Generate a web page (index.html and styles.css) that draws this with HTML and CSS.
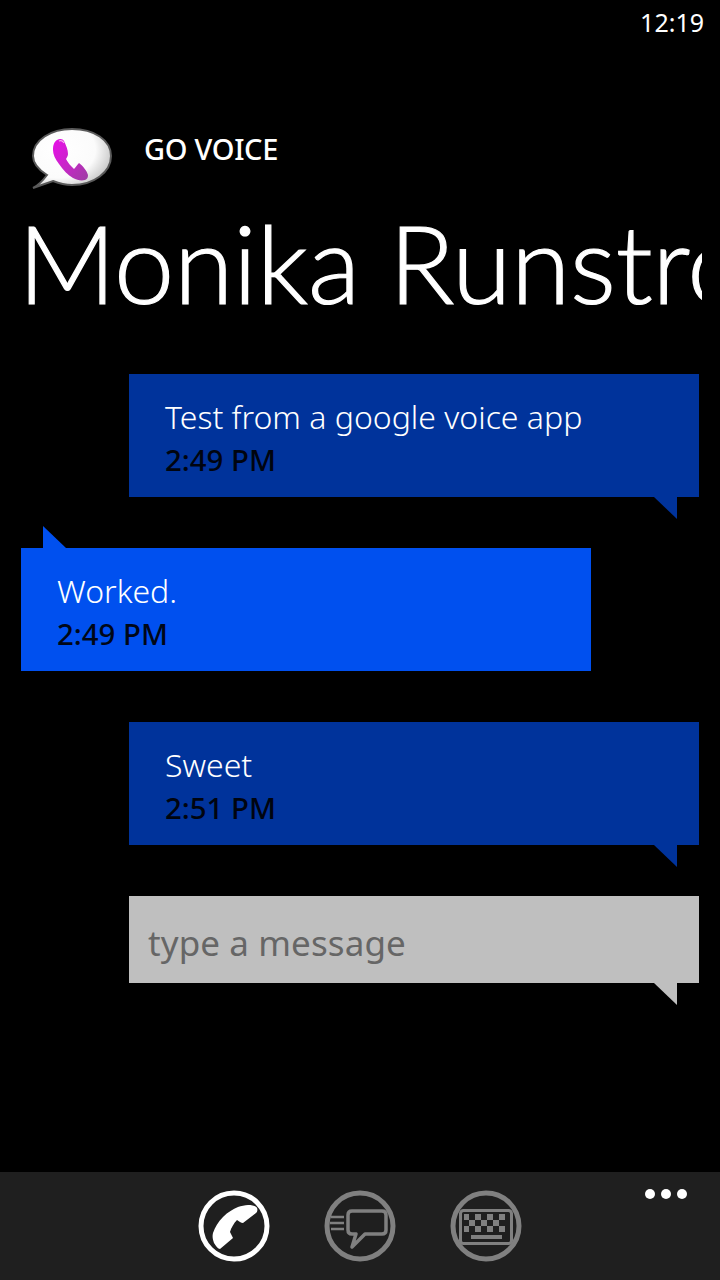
FILE: index.html
```html
<!DOCTYPE html>
<html lang="en">
<head>
<meta charset="utf-8">
<title>Go Voice</title>
<link rel="stylesheet" href="styles.css">
</head>
<body>
<div class="phone">
  <div class="status"><span class="clock">12:19</span></div>
  <header class="app-head">
    <svg class="logo" width="84" height="64" viewBox="0 0 84 64">
      <defs>
        <radialGradient id="bub" cx="0.32" cy="0.35" r="0.8">
          <stop offset="0" stop-color="#fff"/><stop offset="0.6" stop-color="#fbfbfb"/><stop offset="1" stop-color="#b5b5b5"/>
        </radialGradient>
        <linearGradient id="ph" x1="0" y1="0" x2="1" y2="1">
          <stop offset="0" stop-color="#e80fe8"/><stop offset="0.5" stop-color="#c826c8"/><stop offset="1" stop-color="#9c3ea2"/>
        </linearGradient>
      </defs>
      <path d="M16 47C8 42 2 36 2 28C2 12 20 1 41 1C63 1 80 12 80 28C80 44 63 57 41 57C33 57 27 55 22 53L2 60C8 57 13 51 16 47Z" fill="url(#bub)" stroke="#5a5a5a" stroke-width="2"/>
      <path d="M26 12C29 10 32 11 33 13C35 17 37 22 37 26C37 28 36 29 35 31C37 35 40 38 43 41C45 39 46 37 48 35C52 38 56 43 57 47C57 50 56 51 54 52C50 53 46 52 42 50C37 47 32 42 28 36C24 31 22 26 22 22C22 17 23 14 26 12Z" fill="url(#ph)"/>
      <path d="M28 13C30 12 32 13 33 15" fill="none" stroke="#f6b4f0" stroke-width="1.200"/>
    </svg>
    <span class="app-name">GO VOICE</span>
  </header>
  <h1 class="contact">Monika Runström</h1>
  <main class="thread">
    <div class="bubble sent"><p class="body">Test from a google voice app</p><p class="time">2:49 PM</p></div>
    <div class="bubble received"><p class="body">Worked.</p><p class="time">2:49 PM</p></div>
    <div class="bubble sent"><p class="body">Sweet</p><p class="time">2:51 PM</p></div>
    <div class="bubble input"><p class="placeholder">type a message</p></div>
  </main>
  <footer class="appbar">
    <div class="btn active">
      <svg width="72" height="72" viewBox="0 0 72 72"><circle cx="36" cy="36" r="33" fill="none" stroke="#fff" stroke-width="5"/>
        <path d="M50 15C54 15 58 16 59 18C60 20 59 22 58 23L45 33C43 33 41 31 39 30C36 33 33 38 32 42C33 44 34 46 35 48L22 59C20 59 18 56 16 53C15 50 14 47 15 43C17 37 20 32 25 27C30 22 35 19 40 17C43 16 47 15 50 15Z" fill="#fff"/></svg>
    </div>
    <div class="btn">
      <svg width="72" height="72" viewBox="0 0 72 72" fill="none" stroke="#808080"><circle cx="36" cy="36" r="33" stroke-width="5"/>
        <path d="M28 21H58Q62 21 62 25V40Q62 44 58 44H41L28 57L32 44H28Q24 44 24 40V25Q24 21 28 21Z" stroke-width="3.500" stroke-linejoin="round"/>
        <path d="M7 27H20M6 33H20M7 39H20" stroke-width="2.500"/></svg>
    </div>
    <div class="btn">
      <svg width="72" height="72" viewBox="0 0 72 72" fill="none" stroke="#808080"><circle cx="36" cy="36" r="33" stroke-width="5"/>
        <rect x="10.500" y="20.500" width="51" height="33" rx="3" stroke-width="3"/>
        <path fill="#808080" stroke="none" d="M14 24h5v6h-5zM25 24h6v6h-6zM37 24h6v6h-6zM49 24h6v6h-6zM19 30h6v6h-6zM31 30h6v6h-6zM43 30h6v6h-6zM14 36h5v6h-5zM25 36h6v6h-6zM37 36h6v6h-6zM49 36h6v6h-6zM21 45h31v4h-31z"/></svg>
    </div>
    <div class="more"><i></i><i></i><i></i></div>
  </footer>
</div>
</body>
</html>
```
FILE: styles.css
```css
* { box-sizing: border-box; }
html, body { margin: 0; padding: 0; background: #000; }
.phone {
  width: 720px;
  height: 1280px;
  display: flex;
  flex-direction: column;
  color: #fff;
  font-family: "Noto Sans", "Open Sans", sans-serif;
  overflow: hidden;
}
.status {
  height: 50px;
  display: flex;
  justify-content: flex-end;
  padding: 3px 16px 0 0;
}
.clock { font-size: 25px; line-height: 38px; }
.app-head {
  display: flex;
  align-items: center;
  gap: 29px;
  padding-left: 31px;
  margin-top: 78px;
  height: 62px;
}
.logo { flex: none; margin-top: 2px; }
.app-name { font-size: 29px; font-weight: 500; line-height: 40px; margin-top: -20px; letter-spacing: -0.3px; }
.contact {
  margin: 0;
  width: 702px;
  padding-left: 18px;
  overflow: hidden;
  white-space: nowrap;
  font-family: Lato, "Noto Sans", sans-serif;
  font-size: 108px;
  font-weight: 300;
  -webkit-text-stroke: 1.2px #fff;
  letter-spacing: -0.3px;
  line-height: 140px;
  margin-top: 2px;
}
.thread {
  flex: 1;
  display: flex;
  flex-direction: column;
  padding-top: 42px;
  gap: 51px;
}
.bubble {
  position: relative;
  width: 570px;
  height: 123px;
  padding: 21px 0 0 36px;
}
.bubble p { margin: 0; }
.sent { margin-left: 129px; background: #00339b; }
.received { margin-left: 21px; background: #0050ef; }
.input { margin-left: 129px; height: 87px; background: #bfbfbf; padding: 0 0 0 19px; }
.sent::after, .input::after {
  content: "";
  position: absolute;
  right: 22px;
  top: 100%;
  width: 23px;
  height: 22px;
  background: inherit;
  clip-path: polygon(0 0, 100% 0, 100% 100%);
}
.received::before {
  content: "";
  position: absolute;
  left: 22px;
  bottom: 100%;
  width: 23px;
  height: 22px;
  background: inherit;
  clip-path: polygon(0 0, 100% 100%, 0 100%);
}
.body { font-size: 32px; font-weight: 300; line-height: 43px; }
.time { font-size: 29.400px; line-height: 44px; font-weight: 500; color: #000; opacity: .9; }
.placeholder { font-size: 35px; line-height: 94px; color: #666; letter-spacing: 0.1px; }
.appbar {
  position: relative;
  height: 108px;
  background: #1f1f1f;
  display: flex;
  justify-content: center;
  gap: 54px;
  padding-top: 18px;
}
.btn { width: 72px; height: 72px; }
.more {
  position: absolute;
  top: 17px;
  right: 33px;
  display: flex;
  gap: 6px;
}
.more i { width: 10px; height: 10px; border-radius: 50%; background: #fff; }
```
